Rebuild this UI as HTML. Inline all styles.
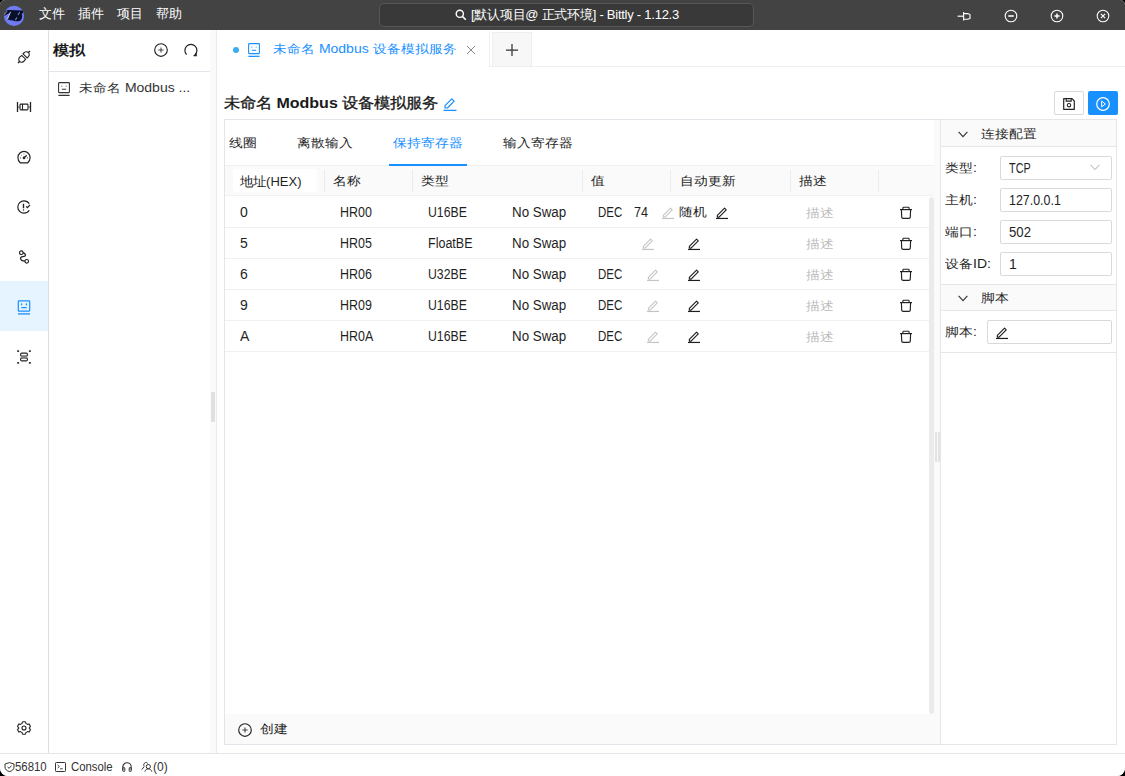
<!DOCTYPE html>
<html><head><meta charset="utf-8">
<style>
*{box-sizing:border-box;margin:0;padding:0}
html,body{width:1125px;height:776px;overflow:hidden;background:#000;font-family:"Liberation Sans",sans-serif;font-size:14px;color:#1f1f1f}
#win{position:absolute;left:0;top:0;width:1125px;height:776px;background:#fff;border-radius:5px 5px 8px 8px;overflow:hidden}
.a{position:absolute}
.t{position:absolute;white-space:nowrap;line-height:16px}
svg{position:absolute;overflow:visible}
#title{left:0;top:0;width:1125px;height:31px;background:#434343;color:#fff}
.menu{top:6px;color:#fff;font-size:13px}
#search{left:379px;top:3px;width:375px;height:24px;background:#393939;border:1px solid #575757;border-radius:5px}
#act{left:0;top:30px;width:49px;height:723px;border-right:1px solid #dcdee3;background:#fff}
#side{left:49px;top:30px;width:161px;height:723px;background:#fff}
#split1{left:210px;top:30px;width:6px;height:723px;background:#fafafa}
#main{left:216px;top:30px;width:909px;height:723px;border-left:1px solid #ebebeb;background:#fff}
#status{left:0;top:753px;width:1125px;height:23px;border-top:1px solid #e4e5ea;background:#fff;font-size:12px}
.hline{position:absolute;height:1px}
.vline{position:absolute;width:1px}
.ic{stroke:#222;fill:none;stroke-width:1.1}
.n{transform-origin:0 0}
.cj{transform:scaleY(.87);transform-origin:0 50%}
</style></head><body>
<div id="win">
<!-- TITLE BAR -->
<div id="title" class="a">
  <svg style="left:3px;top:5px" width="22" height="22" viewBox="0 0 22 22">
    <circle cx="11" cy="10.9" r="10.1" fill="#6e7bf2"/>
    <path d="M2.4 6.4 C3.5 5.4 5 5 6.7 5 L18.8 5.5 C20 5.6 20.4 6.4 20.1 7.2 C19.8 8.2 19.2 8.9 18.6 9.5 C19.4 10.2 19.4 11 19.1 12 C18.8 13.6 18.4 14.8 17.6 15.4 C16 16.2 13.5 16.4 12 16.3 L10.8 15.7 L8 15.2 L4.3 14.6 L6.9 8.2 C5 8.5 3.2 9.5 1.9 10.8 C1.2 10.6 1 10.2 1.1 9.6 C1.3 8.4 1.8 7.2 2.4 6.4 Z" fill="#08102a"/>
    <path d="M4.4 14.3 L7.6 6.8" stroke="#d8dbf8" stroke-width="0.9"/>
    <path d="M12.4 15.2 L13.8 12.4 M15 10 L16.6 7.2" stroke="#8f9af5" stroke-width="1"/>
    <path d="M1.6 9.8 C1.9 8.2 2.8 7.2 4.2 6.6" stroke="#d8dbf8" stroke-width="0.7" fill="none"/>
  </svg>
  <div class="t menu" style="left:39px">文件</div>
  <div class="t menu" style="left:78px">插件</div>
  <div class="t menu" style="left:117px">项目</div>
  <div class="t menu" style="left:156px">帮助</div>
  <div id="search" class="a"></div>
  <svg style="left:455px;top:9px" width="12" height="12" viewBox="0 0 12 12"><circle cx="4.8" cy="4.8" r="3.6" stroke="#fff" stroke-width="1.4" fill="none"/><path d="M7.4 7.4 L10.8 10.8" stroke="#fff" stroke-width="1.6"/></svg>
  <div class="t" style="left:471px;top:7px;color:#fff;font-size:13px;letter-spacing:-0.25px">[默认项目@ 正式环境] - Bittly - 1.12.3</div>
  <!-- window controls -->
  <svg style="left:957px;top:11px" width="14" height="11" viewBox="0 0 14 11"><path d="M0.6 5.2 H6.6" stroke="#fff" stroke-width="1.2" fill="none"/><path d="M6.6 1 V9.6" stroke="#fff" stroke-width="1.1" fill="none"/><path d="M6.6 2.6 H10.6 L13 3.4 V7.4 L10.6 8.2 H6.6" stroke="#fff" stroke-width="1.1" fill="none" stroke-linejoin="round"/></svg>
  <svg style="left:1004px;top:9px" width="14" height="14" viewBox="0 0 14 14"><circle cx="7" cy="7" r="5.8" stroke="#fff" stroke-width="1.1" fill="none"/><path d="M4.3 7 H9.7" stroke="#fff" stroke-width="1.6"/></svg>
  <svg style="left:1050px;top:9px" width="14" height="14" viewBox="0 0 14 14"><circle cx="7" cy="7" r="5.8" stroke="#fff" stroke-width="1.1" fill="none"/><path d="M4.4 7 H9.6 M7 4.4 V9.6" stroke="#fff" stroke-width="1.5"/></svg>
  <svg style="left:1096px;top:9px" width="14" height="14" viewBox="0 0 14 14"><circle cx="7" cy="7" r="5.8" stroke="#fff" stroke-width="1.1" fill="none"/><path d="M4.9 4.9 L9.1 9.1 M9.1 4.9 L4.9 9.1" stroke="#fff" stroke-width="1.2"/></svg>
</div>

<!-- ACTIVITY BAR -->
<div id="act" class="a">
  <div class="a" style="left:0;top:251px;width:48px;height:50px;background:#e6f4ff"></div>
</div>
<!-- icons (page coords) -->
<svg style="left:17px;top:50px" width="14" height="14" viewBox="0 0 14 14" class="ic"><path d="M1 13 L2.6 11.4 M13 1 L11.4 2.6" stroke-width="1.4"/><path d="M2.6 11.4 C1.2 10 1.6 8.2 3 6.8 L4.8 5.4 L8.6 9.2 L7.2 11 C5.8 12.4 4 12.8 2.6 11.4 Z"/><path d="M11.4 2.6 C12.8 4 12.4 5.8 11 7.2 L10.2 8 L6 3.8 L6.8 3 C8.2 1.6 10 1.2 11.4 2.6 Z"/></svg>
<svg style="left:17px;top:100px" width="14" height="14" viewBox="0 0 14 14" class="ic"><path d="M0.5 2 V12 M13.5 2 V12" stroke-width="1.3"/><rect x="3" y="4.1" width="8" height="5.8" rx="0.9" stroke-width="1.1"/><path d="M5.5 4.1 V9.9" stroke-width="1.1"/><path d="M0.5 7 H2.6 M11.4 7 H13.5" stroke-width="0.8"/></svg>
<svg style="left:17px;top:150px" width="14" height="14" viewBox="0 0 14 14" class="ic"><path d="M3.2 12.8 C1.8 11.6 0.9 9.8 0.9 7.6 C0.9 4.2 3.7 1.4 7 1.4 C10.3 1.4 13.1 4.2 13.1 7.6 C13.1 9.8 12.2 11.6 10.8 12.8 Z" stroke-width="1.2"/><path d="M7 7.8 L9.6 5.4" stroke-width="1.3"/><circle cx="7" cy="7.9" r="0.8" fill="#222"/><path d="M3 7.9 H3.8 M10.2 7.9 H11 M4.1 4.9 L4.6 5.3 M9.9 4.9 L9.4 5.3 M7 3.7 V4.3" stroke-width="1"/></svg>
<svg style="left:17px;top:200px" width="14" height="14" viewBox="0 0 14 14" class="ic"><path d="M12.3 3.8 C11.2 2 9.2 0.8 7 0.8 C3.6 0.8 0.8 3.6 0.8 7 C0.8 10.4 3.6 13.2 7 13.2 C9.2 13.2 11.2 12 12.3 10.2" stroke-width="1.2"/><path d="M6.5 3.8 V8.2" stroke-width="1.4"/><circle cx="6.5" cy="10" r="0.7" fill="#222" stroke="none"/><path d="M9.2 6.4 L10.5 7.6 L13 4.9" stroke-width="1.3"/></svg>
<svg style="left:18px;top:250px" width="12" height="14" viewBox="0 0 12 14" class="ic"><circle cx="3.3" cy="2.7" r="1.8" stroke-width="1.15"/><circle cx="8.7" cy="11.3" r="1.8" stroke-width="1.15"/><path d="M4.9 2.8 C6.5 3 7.4 3.8 7.4 5.2 C7.4 6.4 6.4 6.5 4.6 6.6 C2.8 6.7 2.5 7.7 2.6 8.6 C2.8 10 4.3 11 7.1 11.2" stroke-width="1.2"/></svg>
<svg style="left:17px;top:300px" width="14" height="15" viewBox="0 0 14 15" style="" ><rect x="1.3" y="0.8" width="11.4" height="10.4" rx="0.8" stroke="#1890ff" stroke-width="1.2" fill="none"/><path d="M4.6 4 V4.8 M9.4 4 V4.8" stroke="#1890ff" stroke-width="1.3" stroke-linecap="round"/><path d="M4.7 7.6 H9.3" stroke="#1890ff" stroke-width="1.2" stroke-linecap="round"/><path d="M1 13.9 H13" stroke="#1890ff" stroke-width="1.3"/></svg>
<svg style="left:17px;top:350px" width="14" height="14" viewBox="0 0 14 14" class="ic"><path d="M0.2 0.2 h1.9 v1.9 h-1.9 Z M11.9 0.2 h1.9 v1.9 h-1.9 Z M0.2 11.9 h1.9 v1.9 h-1.9 Z M11.9 11.9 h1.9 v1.9 h-1.9 Z" fill="#333" stroke="none"/><rect x="3.6" y="3.1" width="6.8" height="3" rx="1.2" stroke-width="1.1"/><rect x="3.6" y="7.9" width="6.8" height="3" rx="1.2" stroke-width="1.1"/><path d="M4 7 H10" stroke="#999" stroke-width="1.2"/></svg>
<svg style="left:17px;top:721px" width="14" height="14" viewBox="0 0 14 14" class="ic"><path d="M5.6 0.8 H8.4 L8.9 2.4 L10.6 3.4 L12.2 3 L13.5 5.4 L12.4 6.6 V7.4 L13.5 8.6 L12.2 11 L10.6 10.6 L8.9 11.6 L8.4 13.2 H5.6 L5.1 11.6 L3.4 10.6 L1.8 11 L0.5 8.6 L1.6 7.4 V6.6 L0.5 5.4 L1.8 3 L3.4 3.4 L5.1 2.4 Z" stroke-width="1.1" stroke-linejoin="round"/><circle cx="7" cy="7" r="2" stroke-width="1.1"/></svg>

<!-- SIDE PANEL -->
<div id="side" class="a"></div>
<div class="t cj" style="left:53px;top:42px;font-size:16px;line-height:18px;font-weight:bold;color:#1a1a1a">模拟</div>
<svg style="left:154px;top:43px" width="14" height="14" viewBox="0 0 14 14" class="ic"><circle cx="7" cy="7" r="6.3" stroke-width="1.15"/><path d="M4.4 7 H9.6 M7 4.4 V9.6" stroke-width="1.1" stroke="#444"/></svg>
<svg style="left:184px;top:43px" width="14" height="14" viewBox="0 0 14 14" class="ic"><path d="M2.6 11.5 C1.5 10.4 0.9 9 0.9 7.4 C0.9 4 3.6 1.4 6.9 1.4 C10.2 1.4 12.9 4 12.9 7.4 C12.9 9 12.3 10.4 11.2 11.5" stroke-width="1.2"/><path d="M9.6 12.6 L12.2 12.6 L11.9 10" stroke-width="1.3" fill="#222"/></svg>
<div class="hline" style="left:49px;top:71px;width:161px;background:#e4e5ea"></div>
<svg style="left:58px;top:82px" width="12" height="14" viewBox="0 0 12 14"><rect x="0.6" y="0.6" width="10.8" height="10" rx="0.6" stroke="#333" stroke-width="1.1" fill="none"/><path d="M3.8 3.8 V4.6 M8.2 3.8 V4.6" stroke="#333" stroke-width="1.2"/><path d="M3.8 7.3 H8.2" stroke="#333" stroke-width="1.1"/><path d="M0.4 13.3 H11.6" stroke="#333" stroke-width="1.2"/></svg>
<div class="t" style="left:79px;top:80px;color:#333;transform:scaleY(.88);transform-origin:0 50%">未命名 Modbus ...</div>

<!-- SPLITTER 1 -->
<div id="split1" class="a"><div class="a" style="left:1px;top:362px;width:4px;height:30px;background:#e0e0e0"></div></div>

<!-- MAIN -->
<div id="main" class="a"></div>
<!-- tabs -->
<div class="vline" style="left:489px;top:31px;height:36px;background:#efefef"></div>
<div class="a" style="left:492px;top:32px;width:40px;height:34px;background:#f7f7f7;border:1px solid #efefef;border-bottom:none"></div>
<div class="hline" style="left:490px;top:66px;width:635px;background:#efefef"></div>
<div class="a" style="left:233px;top:47px;width:6px;height:6px;border-radius:50%;background:#3aaef0"></div>
<svg style="left:248px;top:43px" width="12" height="14" viewBox="0 0 12 14"><rect x="0.6" y="0.6" width="10.8" height="10" rx="0.6" stroke="#1890ff" stroke-width="1.1" fill="none"/><path d="M3.8 3.8 V4.6 M8.2 3.8 V4.6" stroke="#1890ff" stroke-width="1.2"/><path d="M3.8 7.3 H8.2" stroke="#1890ff" stroke-width="1.1"/><path d="M0.4 13.3 H11.6" stroke="#1890ff" stroke-width="1.2"/></svg>
<div class="t" style="left:273px;top:41px;color:#1890ff;transform:scaleY(.88);transform-origin:0 50%">未命名 Modbus 设备模拟服务</div>
<svg style="left:466px;top:45px" width="10" height="10" viewBox="0 0 10 10"><path d="M1 1 L9 9 M9 1 L1 9" stroke="#8a8a8a" stroke-width="1"/></svg>
<svg style="left:505px;top:43px" width="14" height="14" viewBox="0 0 14 14"><path d="M1 7 H13 M7 1 V13" stroke="#333" stroke-width="1.25"/></svg>

<!-- page title -->
<div class="t" style="left:224px;top:94px;font-size:16px;line-height:18px;font-weight:500;transform:scaleY(.92);transform-origin:0 50%;color:#1a1a1a;-webkit-text-stroke:0.35px #1a1a1a">未命名 <b style="-webkit-text-stroke:0">Modbus</b> 设备模拟服务</div>
<svg style="left:443px;top:97px" width="14" height="14" viewBox="0 0 14 14"><path d="M2 11 V8.6 L8.8 1.8 L11.2 4.2 L4.4 11 Z" stroke="#1890ff" stroke-width="1.2" fill="none" stroke-linejoin="round"/><path d="M0.5 13.4 H13.5" stroke="#1890ff" stroke-width="1.3"/></svg>
<div class="a" style="left:1054px;top:91px;width:30px;height:24px;border:1px solid #d9d9d9;border-radius:2px;background:#fff"></div>
<svg style="left:1063px;top:98px" width="12" height="12" viewBox="0 0 12 12"><path d="M0.7 0.7 H9 L11.3 3 V11.3 H0.7 Z" stroke="#222" stroke-width="1.2" fill="none" stroke-linejoin="round"/><path d="M3.2 0.7 V3.1 H8.2 V0.7" stroke="#222" stroke-width="1.1" fill="none"/><circle cx="6" cy="7.2" r="1.7" stroke="#222" stroke-width="1.1" fill="none"/></svg>
<div class="a" style="left:1088px;top:91px;width:30px;height:24px;border-radius:2px;background:#1890ff"></div>
<svg style="left:1096px;top:97px" width="14" height="14" viewBox="0 0 14 14"><circle cx="7" cy="7" r="6.3" stroke="#fff" stroke-width="1.2" fill="none"/><path d="M5.7 4.1 L9.4 7 L5.7 9.9 Z" stroke="#fff" stroke-width="1" fill="none" stroke-linejoin="round"/></svg>

<!-- CARD -->
<div class="a" style="left:224px;top:119px;width:717px;height:626px;border:1px solid #e4e5ea;border-right:none"></div>
<div class="t cj" style="left:229px;top:135px">线圈</div>
<div class="t cj" style="left:297px;top:135px">离散输入</div>
<div class="t cj" style="left:393px;top:135px;color:#1890ff">保持寄存器</div>
<div class="t cj" style="left:503px;top:135px">输入寄存器</div>
<div class="hline" style="left:225px;top:165px;width:709px;background:#f0f0f0"></div>
<div class="a" style="left:389px;top:164px;width:78px;height:2px;background:#1890ff"></div>
<!-- table header -->
<div class="a" style="left:225px;top:166px;width:709px;height:30px;background:#fafafa;border-bottom:1px solid #f0f0f0"></div>
<div class="a" style="left:233px;top:169px;width:84px;height:23px;background:#fff;border-radius:3px"></div>
<div class="vline" style="left:324px;top:170px;height:22px;background:#ececec"></div>
<div class="vline" style="left:412px;top:170px;height:22px;background:#ececec"></div>
<div class="vline" style="left:582px;top:170px;height:22px;background:#ececec"></div>
<div class="vline" style="left:670px;top:170px;height:22px;background:#ececec"></div>
<div class="vline" style="left:790px;top:170px;height:22px;background:#ececec"></div>
<div class="vline" style="left:878px;top:170px;height:22px;background:#ececec"></div>
<div class="t n" style="left:240px;top:173px;transform:scale(.93,.9);transform-origin:0 50%">地址(HEX)</div>
<div class="t cj" style="left:333px;top:173px">名称</div>
<div class="t cj" style="left:421px;top:173px">类型</div>
<div class="t cj" style="left:591px;top:173px">值</div>
<div class="t cj" style="left:680px;top:173px">自动更新</div>
<div class="t cj" style="left:799px;top:173px">描述</div>
<!-- rows -->
<div id="rows"></div>
<div class="hline" style="left:225px;top:227px;width:704px;background:#f0f0f0"></div>
<div class="t" style="left:240px;top:204px">0</div>
<div class="t n" style="left:340px;top:204px;transform:scaleX(.89)">HR00</div>
<div class="t n" style="left:428px;top:204px;transform:scaleX(0.875)">U16BE</div>
<div class="t n" style="left:512px;top:204px;transform:scaleX(.954)">No Swap</div>
<div class="t n" style="left:598px;top:204px;transform:scaleX(.82)">DEC</div>
<div class="t n" style="left:634px;top:204px;transform:scaleX(.9)">74</div>
<svg style="left:662px;top:207px" width="12" height="12" viewBox="0 0 12 12"><path d="M1.35 10.05 V8.35 L8.55 1.15 L10.25 2.85 L3.05 10.05 Z" stroke="#c4c4c4" stroke-width="1.05" fill="none" stroke-linejoin="round"/><path d="M0 11.45 H12" stroke="#c4c4c4" stroke-width="1.2"/></svg>
<div class="t cj" style="left:679px;top:204px">随机</div>
<svg style="left:716px;top:207px" width="12" height="12" viewBox="0 0 12 12"><path d="M1.35 10.05 V8.35 L8.55 1.15 L10.25 2.85 L3.05 10.05 Z" stroke="#1f1f1f" stroke-width="1.15" fill="none" stroke-linejoin="round"/><path d="M0 11.45 H12" stroke="#1f1f1f" stroke-width="1.2"/></svg>
<div class="t cj" style="left:806px;top:205px;color:#bcbcbc">描述</div>
<svg style="left:900px;top:206px" width="12" height="13" viewBox="0 0 12 13"><path d="M0 3.6 H12" stroke="#222" stroke-width="1.2" fill="none"/><path d="M2.9 3.6 V2 Q2.9 1.2 3.7 1.2 H8.3 Q9.1 1.2 9.1 2 V3.6" stroke="#222" stroke-width="1.1" fill="none"/><path d="M1.4 3.6 L1.7 11.1 Q1.8 12.4 3.1 12.4 H8.9 Q10.2 12.4 10.3 11.1 L10.6 3.6" stroke="#222" stroke-width="1.15" fill="none"/></svg>
<div class="hline" style="left:225px;top:258px;width:704px;background:#f0f0f0"></div>
<div class="t" style="left:240px;top:235px">5</div>
<div class="t n" style="left:340px;top:235px;transform:scaleX(.89)">HR05</div>
<div class="t n" style="left:428px;top:235px;transform:scaleX(0.894)">FloatBE</div>
<div class="t n" style="left:512px;top:235px;transform:scaleX(.954)">No Swap</div>
<svg style="left:642px;top:238px" width="12" height="12" viewBox="0 0 12 12"><path d="M1.35 10.05 V8.35 L8.55 1.15 L10.25 2.85 L3.05 10.05 Z" stroke="#c4c4c4" stroke-width="1.05" fill="none" stroke-linejoin="round"/><path d="M0 11.45 H12" stroke="#c4c4c4" stroke-width="1.2"/></svg>
<svg style="left:688px;top:238px" width="12" height="12" viewBox="0 0 12 12"><path d="M1.35 10.05 V8.35 L8.55 1.15 L10.25 2.85 L3.05 10.05 Z" stroke="#1f1f1f" stroke-width="1.15" fill="none" stroke-linejoin="round"/><path d="M0 11.45 H12" stroke="#1f1f1f" stroke-width="1.2"/></svg>
<div class="t cj" style="left:806px;top:236px;color:#bcbcbc">描述</div>
<svg style="left:900px;top:237px" width="12" height="13" viewBox="0 0 12 13"><path d="M0 3.6 H12" stroke="#222" stroke-width="1.2" fill="none"/><path d="M2.9 3.6 V2 Q2.9 1.2 3.7 1.2 H8.3 Q9.1 1.2 9.1 2 V3.6" stroke="#222" stroke-width="1.1" fill="none"/><path d="M1.4 3.6 L1.7 11.1 Q1.8 12.4 3.1 12.4 H8.9 Q10.2 12.4 10.3 11.1 L10.6 3.6" stroke="#222" stroke-width="1.15" fill="none"/></svg>
<div class="hline" style="left:225px;top:289px;width:704px;background:#f0f0f0"></div>
<div class="t" style="left:240px;top:266px">6</div>
<div class="t n" style="left:340px;top:266px;transform:scaleX(.89)">HR06</div>
<div class="t n" style="left:428px;top:266px;transform:scaleX(0.875)">U32BE</div>
<div class="t n" style="left:512px;top:266px;transform:scaleX(.954)">No Swap</div>
<div class="t n" style="left:598px;top:266px;transform:scaleX(.82)">DEC</div>
<svg style="left:647px;top:269px" width="12" height="12" viewBox="0 0 12 12"><path d="M1.35 10.05 V8.35 L8.55 1.15 L10.25 2.85 L3.05 10.05 Z" stroke="#c4c4c4" stroke-width="1.05" fill="none" stroke-linejoin="round"/><path d="M0 11.45 H12" stroke="#c4c4c4" stroke-width="1.2"/></svg>
<svg style="left:688px;top:269px" width="12" height="12" viewBox="0 0 12 12"><path d="M1.35 10.05 V8.35 L8.55 1.15 L10.25 2.85 L3.05 10.05 Z" stroke="#1f1f1f" stroke-width="1.15" fill="none" stroke-linejoin="round"/><path d="M0 11.45 H12" stroke="#1f1f1f" stroke-width="1.2"/></svg>
<div class="t cj" style="left:806px;top:267px;color:#bcbcbc">描述</div>
<svg style="left:900px;top:268px" width="12" height="13" viewBox="0 0 12 13"><path d="M0 3.6 H12" stroke="#222" stroke-width="1.2" fill="none"/><path d="M2.9 3.6 V2 Q2.9 1.2 3.7 1.2 H8.3 Q9.1 1.2 9.1 2 V3.6" stroke="#222" stroke-width="1.1" fill="none"/><path d="M1.4 3.6 L1.7 11.1 Q1.8 12.4 3.1 12.4 H8.9 Q10.2 12.4 10.3 11.1 L10.6 3.6" stroke="#222" stroke-width="1.15" fill="none"/></svg>
<div class="hline" style="left:225px;top:320px;width:704px;background:#f0f0f0"></div>
<div class="t" style="left:240px;top:297px">9</div>
<div class="t n" style="left:340px;top:297px;transform:scaleX(.89)">HR09</div>
<div class="t n" style="left:428px;top:297px;transform:scaleX(0.875)">U16BE</div>
<div class="t n" style="left:512px;top:297px;transform:scaleX(.954)">No Swap</div>
<div class="t n" style="left:598px;top:297px;transform:scaleX(.82)">DEC</div>
<svg style="left:647px;top:300px" width="12" height="12" viewBox="0 0 12 12"><path d="M1.35 10.05 V8.35 L8.55 1.15 L10.25 2.85 L3.05 10.05 Z" stroke="#c4c4c4" stroke-width="1.05" fill="none" stroke-linejoin="round"/><path d="M0 11.45 H12" stroke="#c4c4c4" stroke-width="1.2"/></svg>
<svg style="left:688px;top:300px" width="12" height="12" viewBox="0 0 12 12"><path d="M1.35 10.05 V8.35 L8.55 1.15 L10.25 2.85 L3.05 10.05 Z" stroke="#1f1f1f" stroke-width="1.15" fill="none" stroke-linejoin="round"/><path d="M0 11.45 H12" stroke="#1f1f1f" stroke-width="1.2"/></svg>
<div class="t cj" style="left:806px;top:298px;color:#bcbcbc">描述</div>
<svg style="left:900px;top:299px" width="12" height="13" viewBox="0 0 12 13"><path d="M0 3.6 H12" stroke="#222" stroke-width="1.2" fill="none"/><path d="M2.9 3.6 V2 Q2.9 1.2 3.7 1.2 H8.3 Q9.1 1.2 9.1 2 V3.6" stroke="#222" stroke-width="1.1" fill="none"/><path d="M1.4 3.6 L1.7 11.1 Q1.8 12.4 3.1 12.4 H8.9 Q10.2 12.4 10.3 11.1 L10.6 3.6" stroke="#222" stroke-width="1.15" fill="none"/></svg>
<div class="hline" style="left:225px;top:351px;width:704px;background:#f0f0f0"></div>
<div class="t" style="left:240px;top:328px">A</div>
<div class="t n" style="left:340px;top:328px;transform:scaleX(.89)">HR0A</div>
<div class="t n" style="left:428px;top:328px;transform:scaleX(0.875)">U16BE</div>
<div class="t n" style="left:512px;top:328px;transform:scaleX(.954)">No Swap</div>
<div class="t n" style="left:598px;top:328px;transform:scaleX(.82)">DEC</div>
<svg style="left:647px;top:331px" width="12" height="12" viewBox="0 0 12 12"><path d="M1.35 10.05 V8.35 L8.55 1.15 L10.25 2.85 L3.05 10.05 Z" stroke="#c4c4c4" stroke-width="1.05" fill="none" stroke-linejoin="round"/><path d="M0 11.45 H12" stroke="#c4c4c4" stroke-width="1.2"/></svg>
<svg style="left:688px;top:331px" width="12" height="12" viewBox="0 0 12 12"><path d="M1.35 10.05 V8.35 L8.55 1.15 L10.25 2.85 L3.05 10.05 Z" stroke="#1f1f1f" stroke-width="1.15" fill="none" stroke-linejoin="round"/><path d="M0 11.45 H12" stroke="#1f1f1f" stroke-width="1.2"/></svg>
<div class="t cj" style="left:806px;top:329px;color:#bcbcbc">描述</div>
<svg style="left:900px;top:330px" width="12" height="13" viewBox="0 0 12 13"><path d="M0 3.6 H12" stroke="#222" stroke-width="1.2" fill="none"/><path d="M2.9 3.6 V2 Q2.9 1.2 3.7 1.2 H8.3 Q9.1 1.2 9.1 2 V3.6" stroke="#222" stroke-width="1.1" fill="none"/><path d="M1.4 3.6 L1.7 11.1 Q1.8 12.4 3.1 12.4 H8.9 Q10.2 12.4 10.3 11.1 L10.6 3.6" stroke="#222" stroke-width="1.15" fill="none"/></svg>
<!-- scrollbar -->
<div class="a" style="left:929px;top:197px;width:5px;height:517px;background:#ebebeb;border-radius:3px"></div>
<!-- footer -->
<div class="a" style="left:225px;top:714px;width:709px;height:30px;background:#fafafa"></div>
<svg style="left:238px;top:723px" width="14" height="14" viewBox="0 0 14 14" class="ic"><circle cx="7" cy="7" r="6.3" stroke-width="1.15"/><path d="M4.4 7 H9.6 M7 4.4 V9.6" stroke-width="1.1" stroke="#444"/></svg>
<div class="t cj" style="left:260px;top:721px">创建</div>
<!-- splitter 2 -->
<div class="a" style="left:934px;top:120px;width:6px;height:624px;background:#fafafa"></div>
<div class="a" style="left:935px;top:432px;width:2px;height:30px;background:#e3e3e3"></div>
<div class="a" style="left:938px;top:432px;width:2px;height:30px;background:#e3e3e3"></div>

<!-- RIGHT PANEL -->
<div class="a" style="left:940px;top:119px;width:177px;height:626px;border:1px solid #e6e6e8"></div>
<div class="a" style="left:941px;top:120px;width:175px;height:27px;background:#fafafa;border-bottom:1px solid #e6e6e8"></div>
<svg style="left:958px;top:131px" width="10" height="7" viewBox="0 0 10 7"><path d="M0.6 0.8 L5 5.6 L9.4 0.8" stroke="#333" stroke-width="1.1" fill="none"/></svg>
<div class="t cj" style="left:981px;top:126px">连接配置</div>
<div class="t cj" style="left:945px;top:160px">类型:</div>
<div class="a" style="left:1000px;top:156px;width:112px;height:24px;border:1px solid #d9d9d9;border-radius:2px;background:#fff"></div>
<div class="t n" style="left:1009px;top:160px;transform:scaleX(0.775)">TCP</div>
<div class="t cj" style="left:945px;top:192px">主机:</div>
<div class="a" style="left:1000px;top:188px;width:112px;height:24px;border:1px solid #d9d9d9;border-radius:2px;background:#fff"></div>
<div class="t n" style="left:1009px;top:192px;transform:scaleX(0.888)">127.0.0.1</div>
<div class="t cj" style="left:945px;top:224px">端口:</div>
<div class="a" style="left:1000px;top:220px;width:112px;height:24px;border:1px solid #d9d9d9;border-radius:2px;background:#fff"></div>
<div class="t n" style="left:1009px;top:224px;transform:scaleX(0.94)">502</div>
<div class="t cj" style="left:945px;top:256px">设备ID:</div>
<div class="a" style="left:1000px;top:252px;width:112px;height:24px;border:1px solid #d9d9d9;border-radius:2px;background:#fff"></div>
<div class="t n" style="left:1009px;top:256px;transform:scaleX(1)">1</div>
<svg style="left:1090px;top:164px" width="10" height="7" viewBox="0 0 10 7"><path d="M0.6 0.8 L5 5.6 L9.4 0.8" stroke="#aaa" stroke-width="1" fill="none"/></svg>
<div class="hline" style="left:941px;top:284px;width:175px;background:#e6e6e8"></div>
<div class="a" style="left:941px;top:285px;width:175px;height:26px;background:#fafafa;border-bottom:1px solid #e6e6e8"></div>
<svg style="left:958px;top:295px" width="10" height="7" viewBox="0 0 10 7"><path d="M0.6 0.8 L5 5.6 L9.4 0.8" stroke="#333" stroke-width="1.1" fill="none"/></svg>
<div class="t cj" style="left:981px;top:290px">脚本</div>
<div class="t cj" style="left:945px;top:324px">脚本:</div>
<div class="a" style="left:987px;top:320px;width:125px;height:24px;border:1px solid #d9d9d9;border-radius:2px;background:#fff"></div>
<svg style="left:996px;top:327px" width="12" height="12" viewBox="0 0 12 12"><path d="M1.35 10.05 V8.35 L8.55 1.15 L10.25 2.85 L3.05 10.05 Z" stroke="#1f1f1f" stroke-width="1.15" fill="none" stroke-linejoin="round"/><path d="M0 11.45 H12" stroke="#1f1f1f" stroke-width="1.2"/></svg>
<div class="hline" style="left:941px;top:352px;width:175px;background:#e6e6e8"></div>

<!-- STATUS -->
<div id="status" class="a"></div>
<svg style="left:4px;top:762px" width="11" height="10" viewBox="0 0 11 10"><path d="M5.5 0.6 L10 2 V5 C10 7.5 8 9 5.5 9.6 C3 9 1 7.5 1 5 V2 Z" stroke="#333" stroke-width="1" fill="none"/><path d="M3.6 5 L5 6.3 L7.6 3.8" stroke="#333" stroke-width="1" fill="none"/></svg>
<div class="t n" style="left:15px;top:760px;font-size:12px;line-height:14px;color:#333;transform:scaleX(.95)">56810</div>
<svg style="left:55px;top:762px" width="11" height="10" viewBox="0 0 11 10"><rect x="0.5" y="0.5" width="10" height="9" rx="0.8" stroke="#333" stroke-width="1" fill="none"/><path d="M2.6 3 L4.4 4.5 L2.6 6 M5 6.8 H7.8" stroke="#333" stroke-width="0.9" fill="none"/></svg>
<div class="t n" style="left:71px;top:760px;font-size:12px;line-height:14px;color:#333;transform:scaleX(.945)">Console</div>
<svg style="left:122px;top:762px" width="10" height="10" viewBox="0 0 10 10"><path d="M0.8 8 V5 C0.8 2.6 2.7 0.8 5 0.8 C7.3 0.8 9.2 2.6 9.2 5 V8" stroke="#333" stroke-width="1.1" fill="none"/><rect x="0.8" y="5.6" width="2" height="3.8" rx="0.5" stroke="#333" stroke-width="1" fill="none"/><rect x="7.2" y="5.6" width="2" height="3.8" rx="0.5" stroke="#333" stroke-width="1" fill="none"/></svg>
<svg style="left:141px;top:761px" width="12" height="12" viewBox="0 0 12 12"><circle cx="7.3" cy="5.6" r="2.1" stroke="#333" stroke-width="1" fill="none"/><path d="M3.9 10.6 C4.4 8.8 5.6 7.9 7.3 7.9 C9 7.9 10.2 8.8 10.8 10.6" stroke="#333" stroke-width="1" fill="none"/><path d="M3.2 5.4 C2.4 4.4 2.6 2 4.6 1.5 C5.6 1.3 6.4 1.8 6.7 2.6" stroke="#333" stroke-width="1" fill="none"/><path d="M3.1 5.8 L0.8 8.6" stroke="#333" stroke-width="1" fill="none"/></svg>
<div class="t n" style="left:153px;top:760px;font-size:12px;line-height:14px;color:#333">(0)</div>
</div>
</body></html>
